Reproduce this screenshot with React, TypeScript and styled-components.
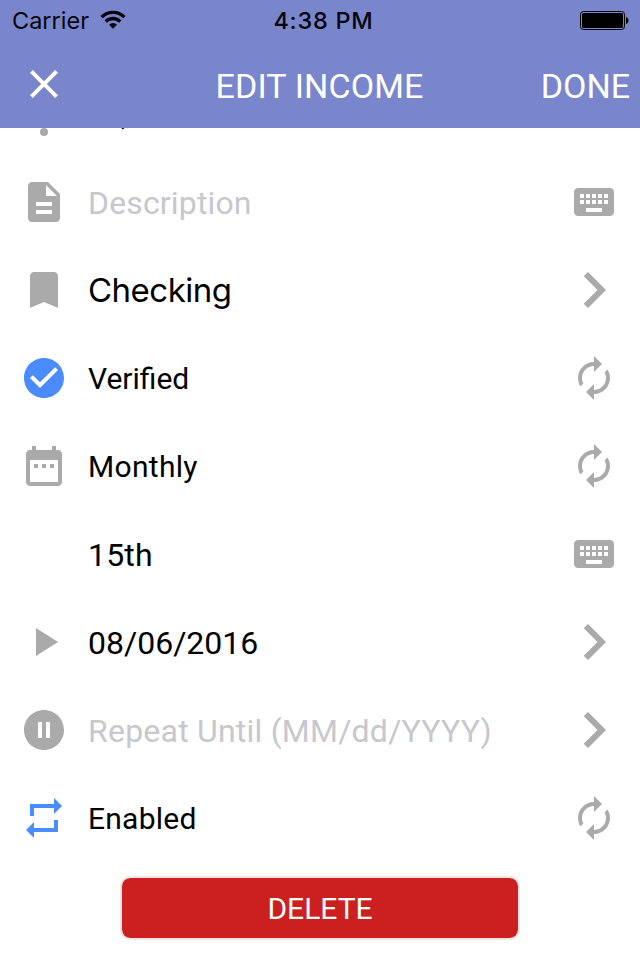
import React from "react";
import styled, { createGlobalStyle } from "styled-components";

const GlobalStyle = createGlobalStyle`
  * { box-sizing: border-box; }
  body { margin: 0; background: #fff; }
`;

const Screen = styled.div`
  display: flex;
  flex-direction: column;
  width: 640px;
  height: 960px;
  overflow: hidden;
  background: #fff;
  font-family: Roboto, sans-serif;
`;

const Header = styled.header`
  flex: none;
  height: 128px;
  background: #7986cc;
`;

const StatusBar = styled.div`
  display: grid;
  grid-template-columns: 1fr auto 1fr;
  align-items: center;
  height: 40px;
  padding: 1px 11px 0 12px;
  font-family: Inter, sans-serif;
  font-size: 24px;
  line-height: 40px;
  color: #05050c;
`;

const Carrier = styled.div`
  display: flex;
  align-items: center;
  gap: 11px;
  font-size: 23.5px;
`;

const Clock = styled.div`
  padding-left: 6px;
  font-size: 23.5px;
  font-weight: 500;
  letter-spacing: 0.75px;
`;

const BatteryIcon = styled.svg`
  justify-self: end;
  display: block;
  width: 50px;
  height: 20px;
  margin-top: -3px;
`;

const WifiIcon = styled.svg`
  display: block;
  width: 26px;
  height: 20px;
  margin-top: -2px;
`;

const NavBar = styled.div`
  display: grid;
  grid-template-columns: 1fr auto 1fr;
  align-items: center;
  height: 88px;
  padding: 4px 10px 0 20px;
  color: #fff;
  font-size: 34px;
  line-height: 40px;
`;

const CloseButton = styled.button`
  width: 48px;
  height: 48px;
  margin-top: -4px;
  padding: 0;
  border: 0;
  background: none;
  color: inherit;
`;

const Title = styled.h1`
  margin: 0;
  padding-right: 11px;
  font: inherit;
  letter-spacing: 0.12px;
`;

const DoneButton = styled.button`
  justify-self: end;
  padding: 0;
  border: 0;
  background: none;
  color: inherit;
  font: inherit;
`;

const Content = styled.main`
  flex: 1;
  overflow: hidden;
`;

/* The list is scrolled so that its first row sits mostly under the header. */
const List = styled.div`
  margin-top: -58px;
`;

const Row = styled.div`
  display: grid;
  grid-template-columns: 48px 1fr 72px;
  column-gap: 20px;
  align-items: center;
  height: 88px;
  padding: 0 10px 0 20px;
`;

const Label = styled.span<{ $size: number; $muted?: boolean; $system?: boolean; $spacing?: number }>`
  padding-top: ${(p) => (p.$system ? 0 : 2)}px;
  font-family: ${(p) => (p.$system ? "Inter" : "Roboto")}, sans-serif;
  font-size: ${(p) => p.$size}px;
  letter-spacing: ${(p) => p.$spacing ?? 0}px;
  line-height: 40px;
  white-space: nowrap;
  color: ${(p) => (p.$muted ? "#c7c7cd" : "#000")};
`;

const Glyph = styled.svg<{ $size?: number; $tint?: string }>`
  display: block;
  justify-self: center;
  width: ${(p) => p.$size ?? 48}px;
  height: ${(p) => p.$size ?? 48}px;
  fill: ${(p) => p.$tint ?? "#aaa"};
`;

const Footer = styled.div`
  display: flex;
  justify-content: center;
  padding-top: 14px;
`;

const DeleteButton = styled.button`
  width: 400px;
  height: 64px;
  padding: 1px 0 0;
  border: 2px solid #f3e4e4;
  border-radius: 10px;
  background: #cc2020;
  background-clip: padding-box;
  color: #fff;
  font: 30px Roboto, sans-serif;
`;

const paths = {
  close: "M19 6.41L17.59 5 12 10.59 6.41 5 5 6.41 10.59 12 5 17.59 6.41 19 12 13.41 17.59 19 19 17.59 13.41 12z",
  dot: "M12 19a2 2 0 1 0 0 4 2 2 0 0 0 0-4z",
  description:
    "M14 2H6c-1.1 0-1.99.9-1.99 2L4 20c0 1.1.89 2 1.99 2H18c1.1 0 2-.9 2-2V8l-6-6zm2 16H8v-2h8v2zm0-4H8v-2h8v2zm-3-5V3.5L18.5 9H13z",
  bookmark: "M17 3H7c-1.1 0-1.99.9-1.99 2L5 21l7-3 7 3V5c0-1.1-.9-2-2-2z",
  check:
    "M12 2C6.48 2 2 6.48 2 12s4.48 10 10 10 10-4.48 10-10S17.52 2 12 2zm-2 15l-5-5 1.41-1.41L10 14.17l7.59-7.59L19 8l-9 9z",
  calendar:
    "M9 11H7v2h2v-2zm4 0h-2v2h2v-2zm4 0h-2v2h2v-2zm2-7h-1V2h-2v2H8V2H6v2H5c-1.11 0-1.99.9-1.99 2L3 20c0 1.1.89 2 2 2h14c1.1 0 2-.9 2-2V6c0-1.1-.9-2-2-2zm0 16H5V9h14v11z",
  play: "M8 5v14l11-7z",
  pause: "M12 2C6.48 2 2 6.48 2 12s4.48 10 10 10 10-4.48 10-10S17.52 2 12 2zm-1 14H9V8h2v8zm4 0h-2V8h2v8z",
  repeat: "M7 7h10v3l4-4-4-4v3H5v6h2V7zm10 10H7v-3l-4 4 4 4v-3h12v-6h-2v4z",
  keyboard:
    "M20 5H4c-1.1 0-1.99.9-1.99 2L2 17c0 1.1.9 2 2 2h16c1.1 0 2-.9 2-2V7c0-1.1-.9-2-2-2zm-9 3h2v2h-2V8zm0 3h2v2h-2v-2zM8 8h2v2H8V8zm0 3h2v2H8v-2zm-1 2H5v-2h2v2zm0-3H5V8h2v2zm9 7H8v-2h8v2zm0-4h-2v-2h2v2zm0-3h-2V8h2v2zm3 3h-2v-2h2v2zm0-3h-2V8h2v2z",
  chevron: "M8.59 16.59L13.17 12 8.59 7.41 10 6l6 6-6 6-1.41-1.41z",
  cycle:
    "M12 6v3l4-4-4-4v3c-4.42 0-8 3.58-8 8 0 1.57.46 3.03 1.24 4.26L6.7 14.8c-.45-.83-.7-1.79-.7-2.8 0-3.31 2.69-6 6-6zm6.76 1.74L17.3 9.2c.44.84.7 1.79.7 2.8 0 3.31-2.69 6-6 6v-3l-4 4 4 4v-3c4.42 0 8-3.58 8-8 0-1.57-.46-3.03-1.24-4.26z",
};

type IconName = keyof typeof paths;

function Icon({ name, tint }: { name: IconName; tint?: string }) {
  return (
    <Glyph viewBox="0 0 24 24" $tint={tint} $size={name === "chevron" ? 72 : 48} aria-hidden>
      <path d={paths[name]} />
    </Glyph>
  );
}

interface Field {
  icon?: IconName;
  tint?: string;
  text: string;
  size: number;
  muted?: boolean;
  system?: boolean;
  spacing?: number;
  action?: IconName;
}

const blue = "#4a8cff";

const fields: Field[] = [
  { icon: "dot", text: "$1,", size: 30, spacing: -0.4 },
  { icon: "description", text: "Description", size: 32, muted: true, spacing: 0.15, action: "keyboard" },
  { icon: "bookmark", text: "Checking", size: 33, system: true, spacing: -0.5, action: "chevron" },
  { icon: "check", tint: blue, text: "Verified", size: 30, action: "cycle" },
  { icon: "calendar", text: "Monthly", size: 30, spacing: 0.3, action: "cycle" },
  { text: "15th", size: 32, spacing: 0.2, action: "keyboard" },
  { icon: "play", text: "08/06/2016", size: 32, action: "chevron" },
  { icon: "pause", text: "Repeat Until (MM/dd/YYYY)", size: 32, muted: true, spacing: 0.22, action: "chevron" },
  { icon: "repeat", tint: blue, text: "Enabled", size: 30, spacing: 0.25, action: "cycle" },
];

export default function App() {
  return (
    <Screen>
      <GlobalStyle />
      <Header>
        <StatusBar>
          <Carrier>
            Carrier
            <WifiIcon viewBox="0 0 26 20" fill="none" stroke="#05050c" strokeWidth="3.4" aria-hidden>
              <path d="M1.6 7.1a16 16 0 0 1 22.8 0" />
              <path d="M5.7 11.6a10.3 10.3 0 0 1 14.6 0" />
              <path d="M13 18.8l-4-4.1a5.7 5.7 0 0 1 8 0z" fill="#05050c" stroke="none" />
            </WifiIcon>
          </Carrier>
          <Clock>4:38 PM</Clock>
          <BatteryIcon viewBox="0 0 50 20" aria-hidden>
            <rect x="1.5" y="1.5" width="44" height="18" rx="3" fill="none" stroke="#000" />
            <rect x="3" y="3" width="41" height="15" rx="1.5" />
            <path d="M47 7c1.6.6 2.5 1.8 2.5 3.5s-.9 2.9-2.5 3.5z" />
          </BatteryIcon>
        </StatusBar>
        <NavBar>
          <CloseButton aria-label="Close">
            <Glyph viewBox="0 0 24 24" $tint="#fff" aria-hidden>
              <path d={paths.close} />
            </Glyph>
          </CloseButton>
          <Title>EDIT INCOME</Title>
          <DoneButton>DONE</DoneButton>
        </NavBar>
      </Header>
      <Content>
        <List>
          {fields.map((f) => (
            <Row key={f.text}>
              {f.icon ? <Icon name={f.icon} tint={f.tint} /> : <span />}
              <Label $size={f.size} $muted={f.muted} $system={f.system} $spacing={f.spacing}>
                {f.text}
              </Label>
              {f.action && <Icon name={f.action} />}
            </Row>
          ))}
        </List>
        <Footer>
          <DeleteButton>DELETE</DeleteButton>
        </Footer>
      </Content>
    </Screen>
  );
}
